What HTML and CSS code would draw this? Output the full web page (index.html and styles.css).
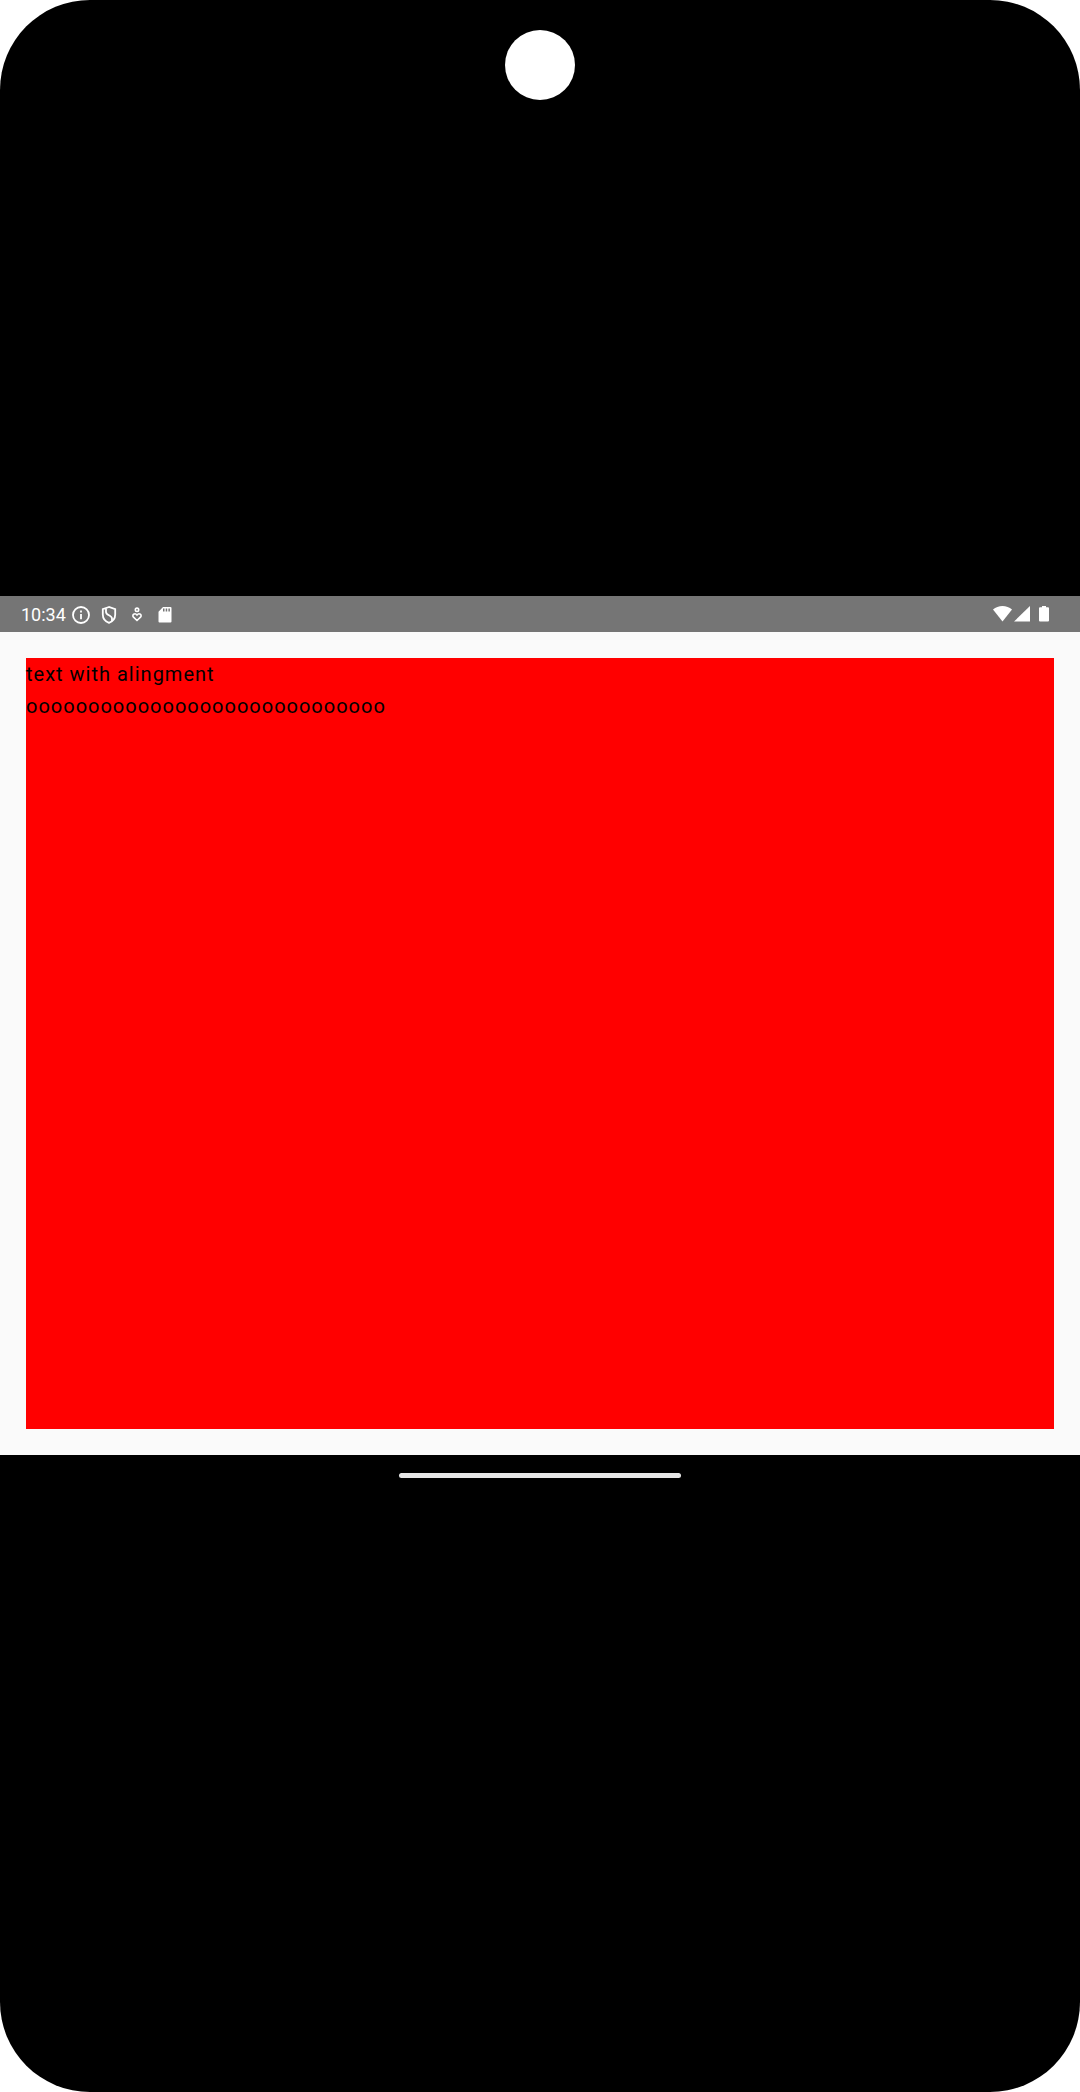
FILE: index.html
```html
<!DOCTYPE html>
<html lang="en">
<head>
<meta charset="utf-8">
<meta name="viewport" content="width=device-width, initial-scale=1">
<title>Text with alignment</title>
<link rel="stylesheet" href="styles.css">
</head>
<body>
<div class="device">
  <div class="camera"></div>
  <header class="status-bar">
    <div class="status-start">
      <span class="clock">10:34</span>
      <div class="notifications">
        <svg class="icon" viewBox="0 0 20 20" fill="none" stroke="#fff" stroke-width="1.8"><circle cx="10" cy="10" r="8"/><path d="M10 9v5.200M10 5.600v1.800"/></svg>
        <svg class="icon" viewBox="0 0 20 20" fill="none" stroke="#fff" stroke-width="1.8"><path d="M10 2 3.800 4.200v5.200c0 4 2.600 7 6.200 8.400 3.600-1.400 6.200-4.400 6.200-8.400V4.200z"/><path d="M7 3.500v3.500c0 3.500 6 3 6 6.500v2.500"/></svg>
        <svg class="icon" viewBox="0 0 20 20" fill="none" stroke="#fff" stroke-width="1.600"><circle cx="10" cy="4.800" r="1.700"/><path d="M10 15.500 6.500 12.200C4.500 10 7.800 7.300 10 10c2.200-2.700 5.500 0 3.500 2.200z"/></svg>
        <svg class="icon" viewBox="0 0 20 20"><path fill="#fff" fill-rule="evenodd" d="M8 2h7.500q1 0 1 1v13.400q0 1-1 1h-11q-1 0-1-1V6.800zM8 3.500v3h1.500v-3zm2.700 0v3h1.500v-3zm2.700 0v3h1.500v-3z"/></svg>
      </div>
    </div>
    <svg class="system-icons" viewBox="0 0 57 20" fill="#fff"><path d="M0 5.500C5 .8 14 .8 19 5.500L9.500 17.500z"/><path d="M37 2v15.500H21z"/><path d="M49 3.200V2h4v1.200h2q1 0 1 1v12.300q0 1-1 1h-8q-1 0-1-1V4.200q0-1 1-1z"/></svg>
  </header>
  <main class="app">
    <div class="panel">
      <p class="text">text with alingment</p>
      <p class="text">ooooooooooooooooooooooooooooo</p>
    </div>
  </main>
  <div class="home-handle"></div>
</div>
</body>
</html>
```
FILE: styles.css
```css
body {
  margin: 0;
  background: #fff;
  font-family: Roboto, sans-serif;
}

.device {
  box-sizing: border-box;
  display: flex;
  flex-direction: column;
  min-height: 100vh;
  padding-bottom: 614px;
  border-radius: 90px;
  background: #000;
}

.camera {
  width: 70px;
  height: 70px;
  margin: 30px auto 496px;
  border-radius: 50%;
  background: #fff;
}

.status-bar {
  display: flex;
  align-items: center;
  justify-content: space-between;
  height: 36px;
  padding: 0 30px 0 21px;
  background: #757575;
  color: #fff;
}

.status-start {
  display: flex;
  align-items: center;
  gap: 5px;
  padding-top: 2px;
}

.clock {
  font-size: 18px;
  line-height: 34px;
}

.notifications {
  display: flex;
  gap: 8px;
}

.icon {
  width: 20px;
  height: 20px;
}

.system-icons {
  width: 57px;
  height: 20px;
}

.app {
  display: flex;
  flex: 1;
  padding: 26px;
  background: #fafafa;
}

.panel {
  flex: 1;
  background: #f00;
}

.text {
  margin: 0;
  color: #000;
  font-size: 20px;
  line-height: 32px;
  letter-spacing: 1px;
}

.home-handle {
  width: 282px;
  height: 5px;
  margin: 18px auto 0;
  border-radius: 3px;
  background: #e6e6e6;
}
```
